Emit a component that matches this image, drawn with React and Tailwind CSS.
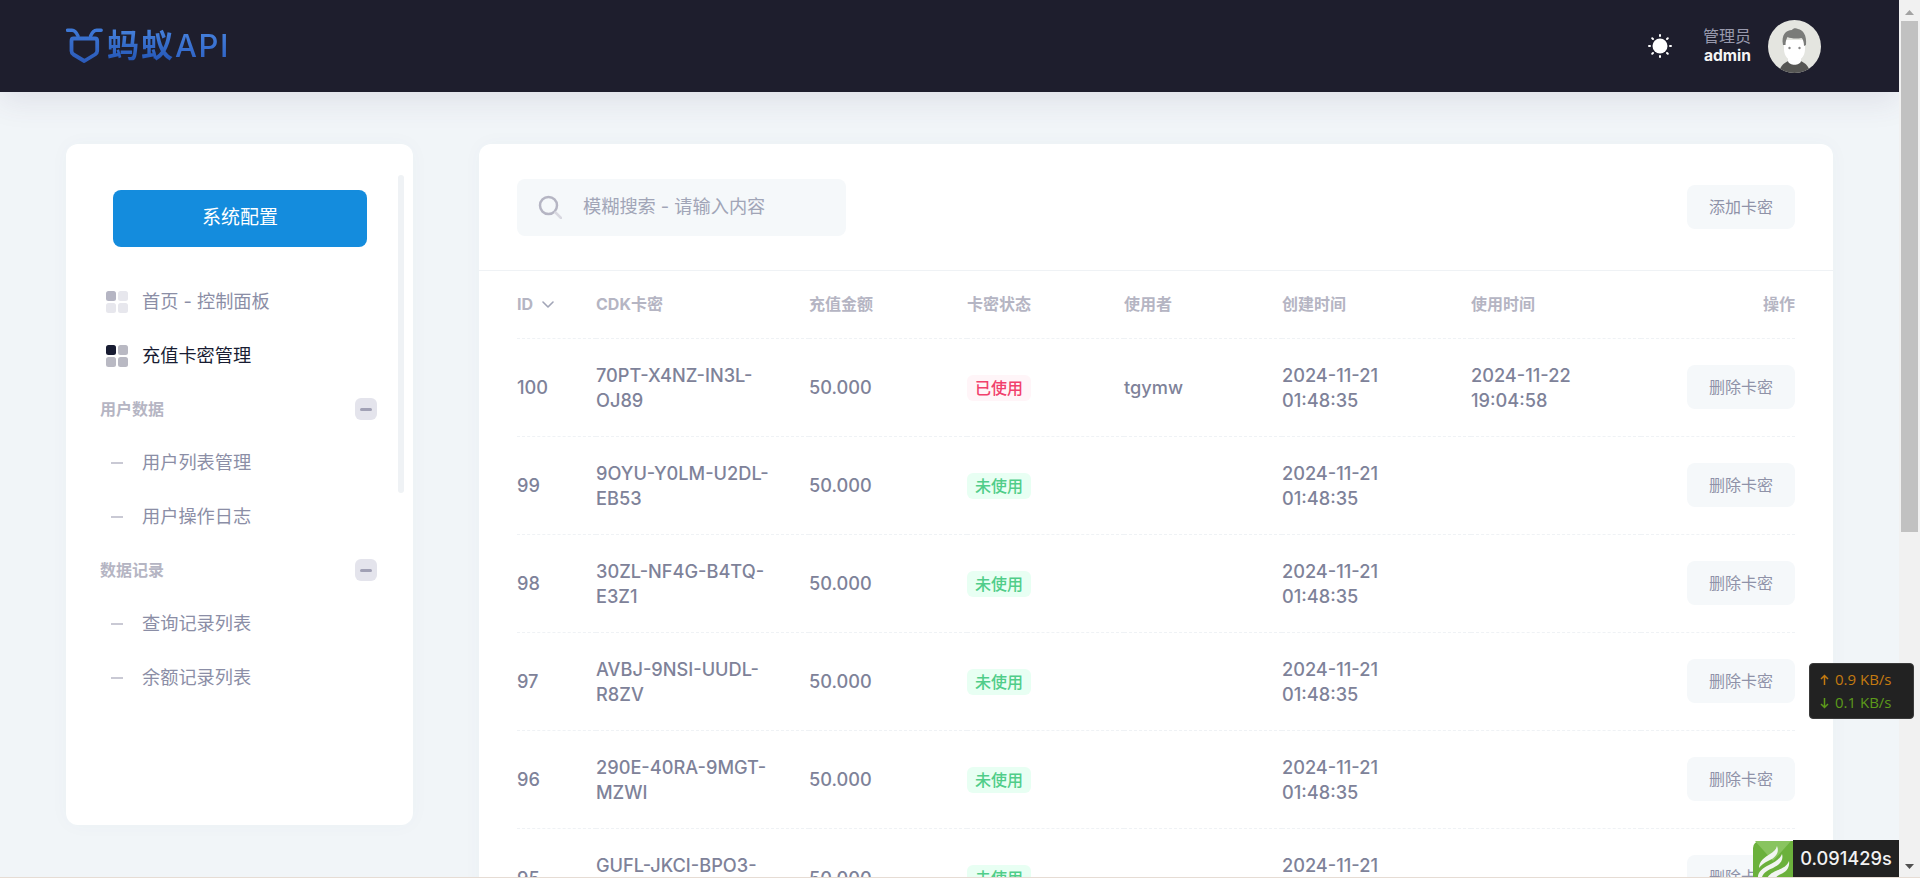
import React from "react";

const rows = [
  { id: 100, code: "70PT-X4NZ-IN3L-OJ89", used: true, user: "tgymw", usedAt: "2024-11-22 19:04:58" },
  { id: 99, code: "9OYU-Y0LM-U2DL-EB53" },
  { id: 98, code: "30ZL-NF4G-B4TQ-E3Z1" },
  { id: 97, code: "AVBJ-9NSI-UUDL-R8ZV" },
  { id: 96, code: "290E-40RA-9MGT-MZWI" },
  { id: 95, code: "GUFL-JKCI-BPO3-K2QA" },
];

function GridIcon({ active }) {
  const main = active ? "#181c32" : "#b5b5c3";
  const rest = active ? "#b9b9c3" : "#e7e7ed";
  return (
    <svg width="22" height="22" viewBox="0 0 22 22" className="shrink-0">
      <rect x="0" y="0" width="10" height="10" rx="2.5" fill={main} />
      <rect x="12" y="0" width="10" height="10" rx="2.5" fill={rest} />
      <rect x="0" y="12" width="10" height="10" rx="2.5" fill={rest} />
      <rect x="12" y="12" width="10" height="10" rx="2.5" fill={rest} />
    </svg>
  );
}

function MenuItem({ label, active }) {
  return (
    <div className="flex h-[54px] items-center gap-[14px] pl-[40px]">
      <GridIcon active={active} />
      <span className={active ? "text-[18.2px] text-[#181c32]" : "text-[18.2px] text-[#8b8ea6]"}>{label}</span>
    </div>
  );
}

function SubItem({ label }) {
  return (
    <div className="flex h-[54px] items-center pl-[45px]">
      <span className="h-[2px] w-[12px] bg-[#c9c9d4]" />
      <span className="ml-[19px] text-[18.2px] text-[#8b8ea6]">{label}</span>
    </div>
  );
}

function Section({ label }) {
  return (
    <div className="flex h-[53px] items-center justify-between pb-[1px] pl-[34px] pr-[36px]">
      <span className="text-[16px] font-bold text-[#b5b5c3]">{label}</span>
      <span className="flex h-[22px] w-[22px] items-center justify-center rounded-[6px] bg-[#e4e4ec]">
        <span className="h-[3px] w-[12px] rounded-full bg-[#a1a1b5]" />
      </span>
    </div>
  );
}

function Logo() {
  return (
    <div className="flex items-center">
      <svg width="38" height="38" viewBox="0 0 38 38" fill="none">
        <defs>
          <linearGradient id="lg" x1="0" y1="0" x2="0" y2="38" gradientUnits="userSpaceOnUse">
            <stop offset="0" stopColor="#3f7ad8" />
            <stop offset="1" stopColor="#2a58b6" />
          </linearGradient>
        </defs>
        <path d="M7.500 11.500H29Q31.200 11.500 31.200 14V24Q31.200 26 29 27.500L18.300 34L7.500 27.500Q5.500 26 5.500 24V14Q5.500 11.500 7.500 11.500Z" stroke="url(#lg)" strokeWidth="3.800" strokeLinejoin="round" />
        <path d="M1.500 3.200H6Q9.500 3.200 12 9M35.200 3.200H30.600Q27 3.200 24.600 9" stroke="url(#lg)" strokeWidth="3.400" strokeLinecap="round" />
      </svg>
      <span className="ml-[3px] bg-gradient-to-b from-[#4a86e0] to-[#1f4fb0] bg-clip-text text-[32px] font-bold leading-[40px] tracking-[2px] text-transparent blur-[0.4px]">
        蚂蚁
      </span>
      <span className="bg-gradient-to-b from-[#4a86e0] to-[#2a5cc0] bg-clip-text text-[31px] font-medium leading-[40px] tracking-[1.5px] text-transparent blur-[0.4px]">
        API
      </span>
    </div>
  );
}

function Sun() {
  return (
    <svg width="24" height="24" viewBox="0 0 24 24" className="shrink-0">
      <circle cx="12" cy="12" r="7.500" fill="#fff" />
      <g stroke="#fff" strokeWidth="2" strokeLinecap="round">
        <path d="M12 1v1M12 22v1M1 12h1M22 12h1M4.200 4.200l.8.8M19 19l.8.8M4.200 19.800l.8-.8M19 5l.8-.8" />
      </g>
    </svg>
  );
}

function Avatar() {
  return (
    <svg width="53" height="53" viewBox="0 0 53 53" className="shrink-0">
      <clipPath id="av"><circle cx="26.500" cy="26.500" r="26.500" /></clipPath>
      <g clipPath="url(#av)">
        <rect width="53" height="53" fill="#e4e5e0" />
        <path d="M11 53c1-8 6-11 12-13h7c6 2 11 5 12 13z" fill="#565654" />
        <path d="M20 38h13v3c-1 5-12 5-13 0z" fill="#fff" />
        <path d="M16 20h21v9c0 8-5 12-10.500 12S16 37 16 29z" fill="#fff" />
        <path d="M15 25c-2-10 3-15 9-15 1-2 4-2.500 6-1 5 1 9 6 8 16l-2 1c0-4-1-7-2.500-8-5 1-11 .5-14-1-1 2-2 4-2 8z" fill="#7a7b79" />
        <circle cx="21.500" cy="28" r="1.200" fill="#888" />
        <circle cx="31.500" cy="28" r="1.200" fill="#888" />
      </g>
    </svg>
  );
}

function SearchIcon() {
  return (
    <svg width="24" height="24" viewBox="0 0 24 24" fill="none" className="shrink-0">
      <circle cx="10.500" cy="10.500" r="8.500" stroke="#b5b5c3" strokeWidth="2.500" />
      <path d="M17.500 17.500L23 23" stroke="#d8d8e0" strokeWidth="2.500" strokeLinecap="round" />
    </svg>
  );
}

function Row({ r }) {
  const td = "border-t border-dashed border-[#eff2f5] align-middle pr-[24px] pt-[2px] text-[18.2px] font-medium leading-[25.500px] text-[#7e8299]";
  return (
    <tr className="h-[98px]">
      <td className={td}>{r.id}</td>
      <td className={td}>{r.code}</td>
      <td className={td}>50.000</td>
      <td className={td}>
        <span
          className={
            r.used
              ? "inline-block rounded-[6px] bg-[#fff5f8] px-[8px] text-[16px] leading-[26px] text-[#f1416c]"
              : "inline-block rounded-[6px] bg-[#e8fff3] px-[8px] text-[16px] leading-[26px] text-[#50cd89]"
          }
        >
          {r.used ? "已使用" : "未使用"}
        </span>
      </td>
      <td className={td}>{r.user}</td>
      <td className={td}>2024-11-21 01:48:35</td>
      <td className={td}>{r.usedAt}</td>
      <td className="border-t border-dashed border-[#eff2f5] text-right align-middle">
        <button className="h-[44px] w-[108px] rounded-[8px] bg-[#f5f8fa] text-[16px] text-[#8f92a8]">删除卡密</button>
      </td>
    </tr>
  );
}

export default function App() {
  const th = "text-left text-[16px] font-bold text-[#b5b5c3]";
  return (
    <div className="relative flex h-screen overflow-hidden bg-[#f1f1f1] font-['Inter','Noto_Sans_CJK_SC',sans-serif]">
      <div className="relative min-w-0 flex-1 overflow-hidden bg-[#f1f5f8]">
        <header className="relative flex h-[92px] items-center bg-[#1e1e2d] pl-[66px] pr-[78px] shadow-[0_10px_30px_0_rgba(82,63,105,0.1)]">
          <Logo />
          <div className="ml-auto flex items-center">
            <Sun />
            <div className="ml-[31px] flex flex-col items-end">
              <span className="text-[16px] leading-[20px] text-[#9899ac]">管理员</span>
              <span className="text-[15.600px] font-bold leading-[20px] text-[#f5f5f5]">admin</span>
            </div>
            <div className="ml-[17px]">
              <Avatar />
            </div>
          </div>
        </header>

        <div className="flex items-start gap-[66px] px-[66px] pt-[52px]">
          <aside className="relative h-[681px] w-[347px] shrink-0 rounded-[12px] bg-white pt-[46px] shadow-[0_0_20px_0_rgba(76,87,125,0.03)]">
            <span className="absolute left-[332px] top-[31px] h-[318px] w-[6px] rounded-[3px] bg-[#eff2f5]" />
            <button className="mx-[47px] block h-[57px] w-[254px] rounded-[8px] bg-[#148cdd] text-[19px] text-white">系统配置</button>
            <nav className="mt-[28px]">
              <MenuItem label="首页 - 控制面板" />
              <MenuItem label="充值卡密管理" active />
              <Section label="用户数据" />
              <SubItem label="用户列表管理" />
              <SubItem label="用户操作日志" />
              <Section label="数据记录" />
              <SubItem label="查询记录列表" />
              <SubItem label="余额记录列表" />
            </nav>
          </aside>

          <main className="w-[1354px] shrink-0 rounded-[12px] bg-white shadow-[0_0_20px_0_rgba(76,87,125,0.03)]">
            <div className="flex h-[127px] items-center justify-between border-b border-[#eff2f5] px-[38px]">
              <div className="flex h-[57px] w-[329px] items-center rounded-[8px] bg-[#f5f8fa] pl-[21px]">
                <SearchIcon />
                <input
                  readOnly
                  placeholder="模糊搜索 - 请输入内容"
                  className="ml-[21px] w-[260px] bg-transparent text-[18.2px] outline-none placeholder:text-[#a1a5b7]"
                />
              </div>
              <button className="h-[44px] w-[108px] rounded-[8px] bg-[#f5f8fa] text-[16px] text-[#8f92a8]">添加卡密</button>
            </div>
            <div className="px-[38px]">
              <table className="w-[1278px] table-fixed border-collapse">
                <colgroup>
                  <col className="w-[79px]" />
                  <col className="w-[213px]" />
                  <col className="w-[158px]" />
                  <col className="w-[157px]" />
                  <col className="w-[158px]" />
                  <col className="w-[189px]" />
                  <col className="w-[170px]" />
                  <col />
                </colgroup>
                <thead>
                  <tr className="h-[67px]">
                    <th className={th}>
                      <span className="inline-flex items-center gap-[9px]">
                        ID
                        <svg width="12" height="7" viewBox="0 0 12 7" fill="none">
                          <path d="M1 1l5 5 5-5" stroke="#a1a5b7" strokeWidth="1.600" strokeLinecap="round" strokeLinejoin="round" />
                        </svg>
                      </span>
                    </th>
                    <th className={th}>CDK卡密</th>
                    <th className={th}>充值金额</th>
                    <th className={th}>卡密状态</th>
                    <th className={th}>使用者</th>
                    <th className={th}>创建时间</th>
                    <th className={th}>使用时间</th>
                    <th className="text-right text-[16px] font-bold text-[#b5b5c3]">操作</th>
                  </tr>
                </thead>
                <tbody>
                  {rows.map((r) => (
                    <Row key={r.id} r={r} />
                  ))}
                </tbody>
              </table>
            </div>
          </main>
        </div>

        <div className="absolute bottom-0 right-0 flex h-[38px] items-stretch">
          <svg width="40" height="38" viewBox="0 0 40 38" className="mt-[1px]">
            <path d="M0 7a7 7 0 0 1 7-7h33v38H0z" fill="#6bb13c" />
            <path d="M2 0h36L20 20z" fill="#89c45f" />
            <path d="M24 5C27 12 22 17 15 20C11 22 8 24 6 27C6 20 12 16 17 13C20 11 23 9 24 5Z" fill="#f2f5f2" />
            <path d="M29 13C31 20 26 24 20 27C15 29 11 31 9 36L8 38H5C4 31 10 27 16 24C22 21 27 18 29 13Z" fill="#f2f5f2" />
            <path d="M36 20C37 27 33 31 28 33C25 34 23 36 22 38H14C15 34 20 31 25 29C30 27 34 25 36 20Z" fill="#f2f5f2" />
          </svg>
          <span className="flex w-[106px] items-center justify-center bg-[#222222] text-[18.200px] font-medium text-[#f2f2f2]">0.091429s</span>
        </div>
      </div>

      <div className="flex w-[21px] shrink-0 flex-col pl-[2px]">
        <svg width="17" height="21" viewBox="0 0 17 21" className="shrink-0">
          <path d="M4 15l4.500-5 4.500 5z" fill="#a3a3a3" />
        </svg>
        <div className="h-[511px] w-[17px] bg-[#c1c1c1]" />
        <div className="flex-1" />
        <svg width="17" height="21" viewBox="0 0 17 21" className="shrink-0">
          <path d="M4 7l4.500 5 4.500-5z" fill="#505050" />
        </svg>
      </div>

      <div className="absolute left-[1809px] top-[663px] flex h-[56px] w-[105px] flex-col justify-center rounded-[4px] border border-[#3a3a3a] bg-[#222222] pl-[10px] font-['Open_Sans',sans-serif] text-[15px] leading-[23px]">
        <span className="flex items-center gap-[6px] text-[#c47a10]">
          <svg width="9" height="12" viewBox="0 0 9 12" fill="none"><path d="M4.500 11V1.500M1 5l3.500-3.500L8 5" stroke="#c47a10" strokeWidth="1.500" /></svg>
          0.9 KB/s
        </span>
        <span className="flex items-center gap-[6px] text-[#5c9a1a]">
          <svg width="9" height="12" viewBox="0 0 9 12" fill="none"><path d="M4.500 1v9.500M1 7l3.500 3.500L8 7" stroke="#5c9a1a" strokeWidth="1.500" /></svg>
          0.1 KB/s
        </span>
      </div>
      <div className="absolute bottom-0 left-0 h-px w-full bg-[#e6dcd4]" />
    </div>
  );
}
